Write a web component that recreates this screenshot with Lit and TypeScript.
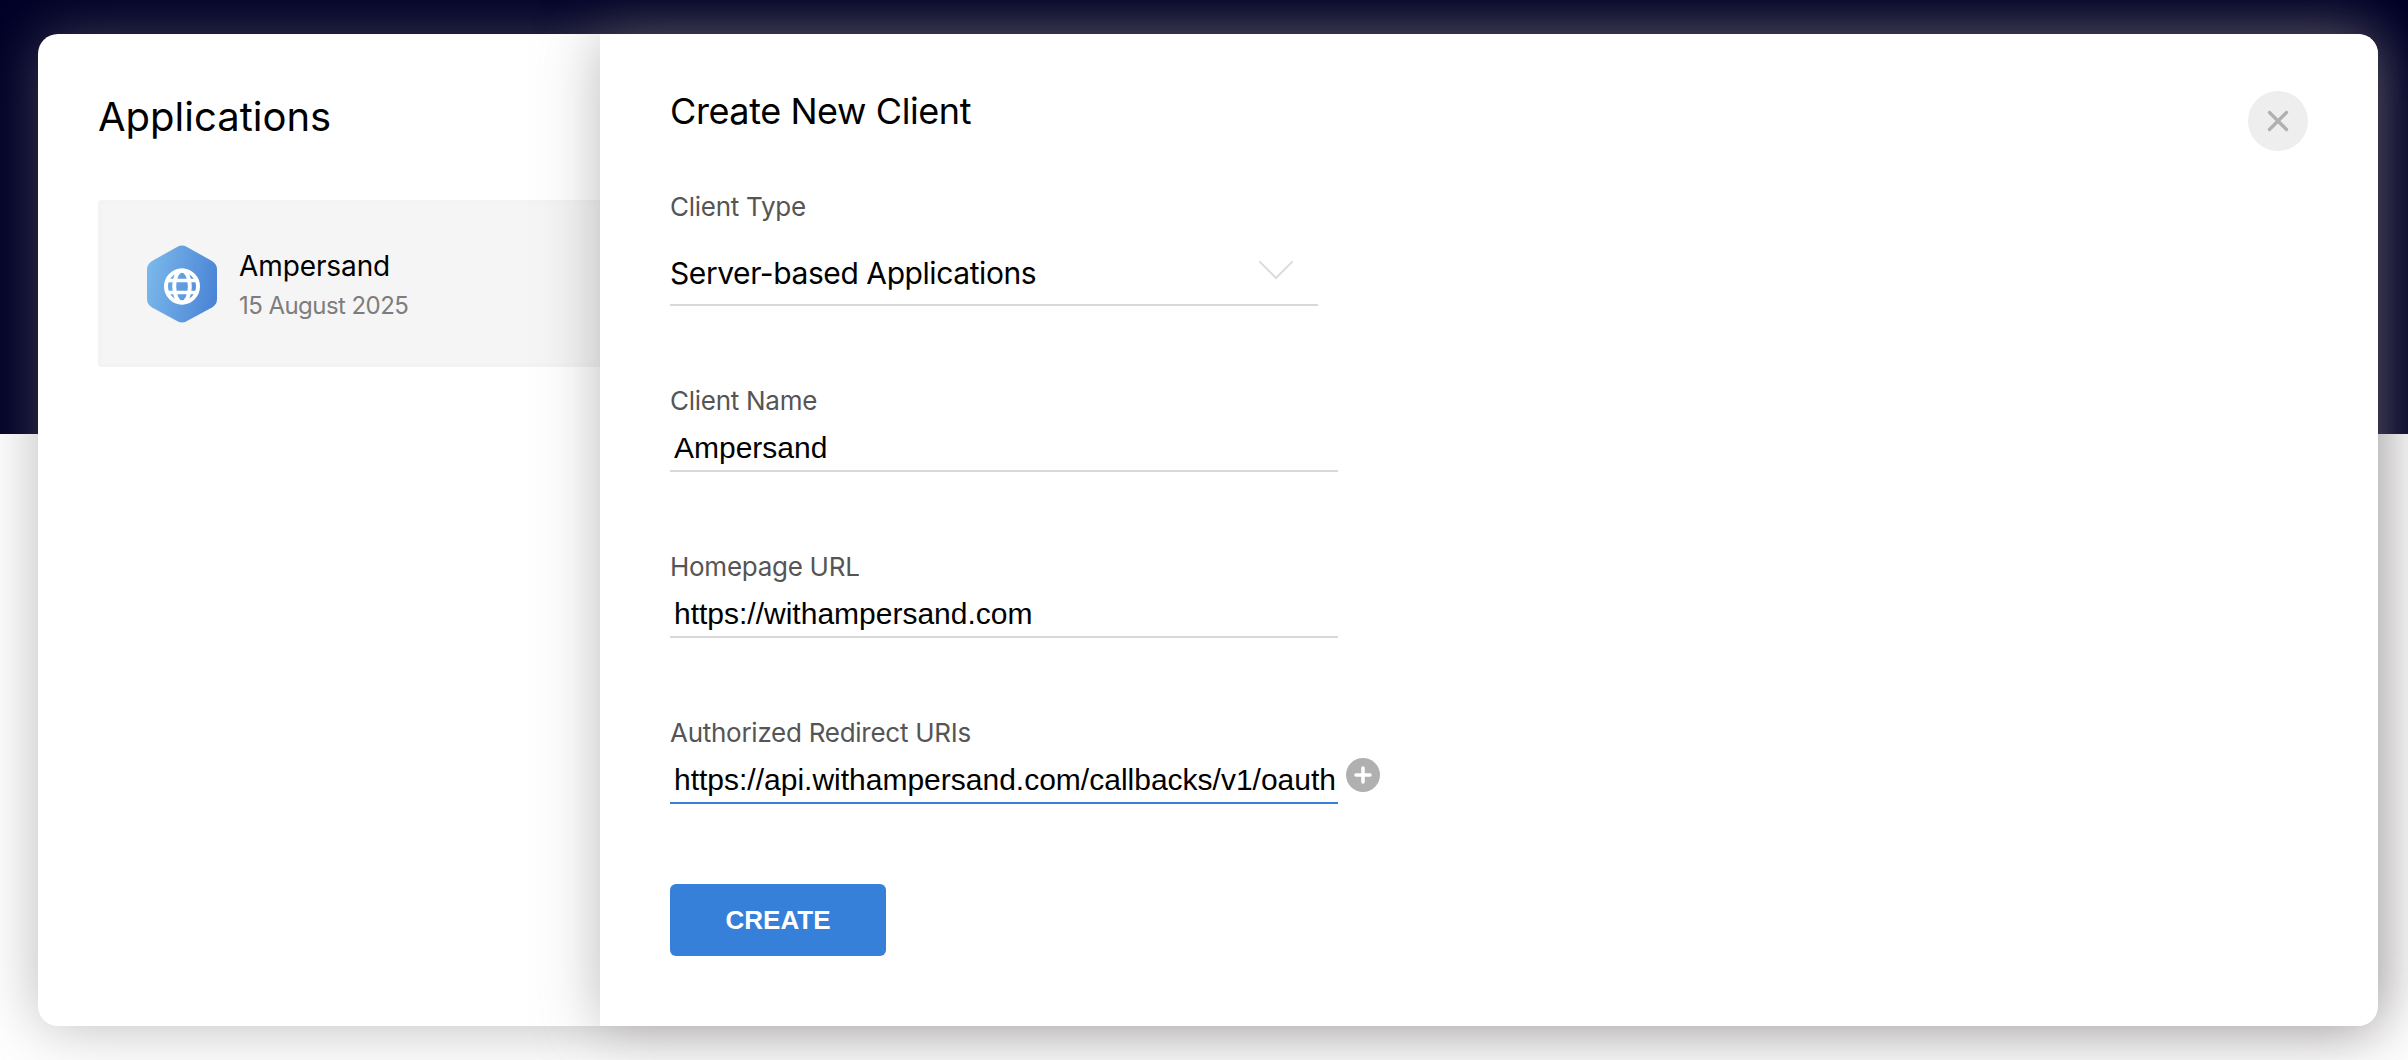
import { LitElement, html, css } from "lit";
import { customElement } from "lit/decorators.js";

@customElement("app-root")
export class AppRoot extends LitElement {
  static styles = css`
    :host {
      display: block;
      font-family: Inter, "Liberation Sans", sans-serif;
      color: #000;
    }
    * {
      box-sizing: border-box;
    }
    h1, h2, p {
      margin: 0;
      font-weight: 400;
    }
    .page {
      height: 1060px;
      padding: 34px 30px 34px 38px;
      overflow: hidden;
      background: linear-gradient(#000028 434px, #fff 434px);
    }
    .card {
      display: flex;
      height: 992px;
      border-radius: 20px;
      background: #fff;
      box-shadow: 0 0 60px rgba(123, 120, 120, 0.5);
    }
    .apps {
      width: 562px;
      padding: 59px 0 0 60px;
    }
    .title {
      font-size: 40px;
      line-height: 48px;
      white-space: nowrap;
    }
    .app {
      display: flex;
      align-items: center;
      gap: 22px;
      height: 167px;
      margin-top: 59px;
      padding-left: 45px;
      background: #f5f5f5;
      border: 4px solid #f3f3f3;
      border-right: 0;
      border-radius: 4px 0 0 4px;
    }
    .hex {
      display: block;
      width: 70px;
      height: 78px;
    }
    .name {
      font-size: 28px;
      line-height: 36px;
      margin-top: 2px;
      letter-spacing: -0.1px;
    }
    .date {
      font-size: 24px;
      line-height: 30px;
      margin-top: 7px;
      letter-spacing: -0.55px;
      color: #7d7d7d;
    }
    .panel {
      display: flex;
      justify-content: space-between;
      align-items: flex-start;
      width: 1778px;
      padding: 55px 70px 0;
      border-radius: 0 20px 20px 0;
      background: #fff;
      box-shadow: 0 0 60px rgba(123, 120, 120, 0.5);
    }
    .form {
      display: flex;
      flex-direction: column;
      align-items: flex-start;
    }
    .heading {
      font-size: 36px;
      line-height: 44px;
      letter-spacing: -0.42px;
      margin-bottom: 58px;
    }
    .field {
      display: flex;
      flex-direction: column;
      margin-bottom: 79px;
    }
    .label {
      font-size: 26px;
      line-height: 32px;
      letter-spacing: -0.27px;
      color: #555;
    }
    .select {
      display: flex;
      align-items: center;
      justify-content: space-between;
      width: 648px;
      height: 62px;
      margin-top: 21px;
      padding: 0 24px 2px 0;
      border-bottom: 2px solid #d9d9d9;
      font-size: 30px;
      line-height: 36px;
      letter-spacing: -0.42px;
    }
    .chevron {
      display: block;
      margin-bottom: 7px;
    }
    .row {
      display: flex;
      align-items: center;
      gap: 7.5px;
      margin-top: 9px;
    }
    .input {
      width: 668px;
      height: 46px;
      padding: 0 0 0 4px;
      border: 0;
      border-bottom: 2px solid #d9d9d9;
      border-radius: 0;
      outline: none;
      background: none;
      color: #000;
      font: 30px "Liberation Sans", Arial, sans-serif;
    }
    .active {
      border-color: #3680d9;
    }
    .add {
      display: block;
      margin-bottom: 12px;
    }
    .create {
      width: 216px;
      height: 72px;
      margin-top: 1px;
      padding: 0;
      border: 0;
      border-radius: 6px;
      background: #3680d9;
      color: #fff;
      font: bold 26px "Liberation Sans", Arial, sans-serif;
    }
    .close {
      display: block;
      width: 60px;
      height: 60px;
      margin-top: 2px;
    }
  `;

  private fields = [
    { label: "Client Name", value: "Ampersand", active: false },
    { label: "Homepage URL", value: "https://withampersand.com", active: false },
    { label: "Authorized Redirect URIs", value: "https://api.withampersand.com/callbacks/v1/oauth", active: true },
  ];

  render() {
    return html`
      <div class="page">
        <div class="card">
          <section class="apps">
            <h1 class="title">Applications</h1>
            <div class="app">
              <svg class="hex" viewBox="0 0 70 78">
                <defs>
                  <linearGradient id="fill" x1="0" y1="0.4" x2="1" y2="0.6">
                    <stop offset="0" stop-color="#7ab7ea" />
                    <stop offset="1" stop-color="#4a84d6" />
                  </linearGradient>
                </defs>
                <path fill="url(#fill)" d="M30.5 1.7Q35 -0.7 39.5 1.7L65 16Q70 19 70 24.5V54Q70 59.5 65 62.5L39.5 76.3Q35 78.7 30.5 76.3L5 62.5Q0 59.5 0 54V24.5Q0 19 5 16Z" />
                <g fill="none" stroke="#fff" stroke-width="4">
                  <circle cx="35" cy="41.5" r="16" />
                  <ellipse cx="35" cy="41.5" rx="7.8" ry="16" />
                  <path d="M21 35.5H49M21 47.5H49" stroke-width="3.4" />
                </g>
              </svg>
              <div>
                <p class="name">Ampersand</p>
                <p class="date">15 August 2025</p>
              </div>
            </div>
          </section>
          <section class="panel">
            <div class="form">
              <h2 class="heading">Create New Client</h2>
              <div class="field">
                <label class="label">Client Type</label>
                <div class="select">
                  <span>Server-based Applications</span>
                  <svg class="chevron" width="36" height="20" viewBox="0 0 36 20">
                    <path d="M1.5 1.5L18 18L34.5 1.5" fill="none" stroke="#dcdcdc" stroke-width="2" />
                  </svg>
                </div>
              </div>
              ${this.fields.map(
                (f) => html`
                  <div class="field">
                    <label class="label">${f.label}</label>
                    <div class="row">
                      <input class="input ${f.active ? "active" : ""}" .value=${f.value} />
                      ${f.active
                        ? html`<svg class="add" width="34" height="34" viewBox="0 0 34 34">
                            <circle cx="17" cy="17" r="17" fill="#b0b0b0" />
                            <path d="M17 10V24M10 17H24" stroke="#fff" stroke-width="3.5" stroke-linecap="round" />
                          </svg>`
                        : ""}
                    </div>
                  </div>
                `
              )}
              <button class="create">CREATE</button>
            </div>
            <svg class="close" viewBox="0 0 60 60">
              <circle cx="30" cy="30" r="30" fill="#eee" />
              <path d="M21.5 21.5L38.5 38.5M38.5 21.5L21.5 38.5" stroke="#b0b0b0" stroke-width="3.3" stroke-linecap="round" />
            </svg>
          </section>
        </div>
      </div>
    `;
  }
}
